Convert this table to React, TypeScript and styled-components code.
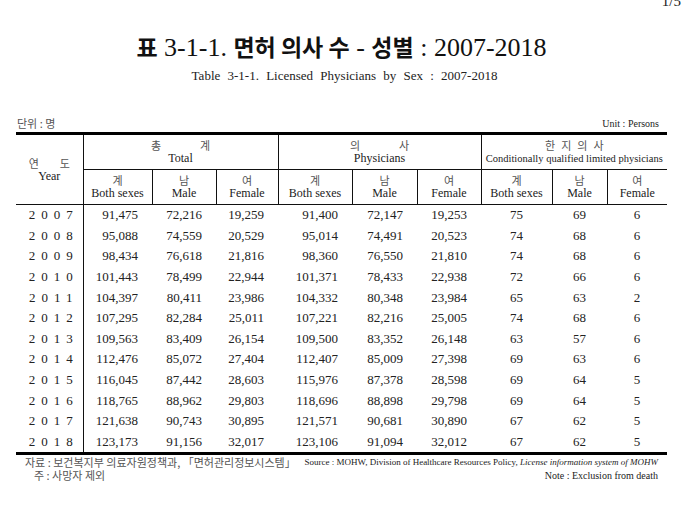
import React from 'react';
import styled, { createGlobalStyle } from 'styled-components';

const Global = createGlobalStyle`
  html, body { margin: 0; padding: 0; background: #fff; }
  body {
    width: 689px; height: 507px; overflow: hidden;
    font-family: "Liberation Serif", "Noto Sans CJK KR", serif;
    color: #1a1a1a;
  }
`;

const Page = styled.div`
  width: 689px;
  height: 507px;
  overflow: hidden;
  display: flex;
  flex-direction: column;
`;

const PageNo = styled.div`
  height: 8px;
  text-align: right;
  padding-right: 8px;
  font: 15px/16px "Liberation Serif", serif;
  color: #222;
  margin-top: -7px;
  & > span { display: inline-block; }
`;

const Title = styled.h1`
  margin: 30px 0 0;
  text-align: center;
  font: 400 26px/30px "Liberation Serif", serif;
  color: #111;
  padding-right: 6px;
  white-space: nowrap;
`;

const TitleKo = styled.span`
  font-family: "Noto Sans CJK KR", sans-serif;
  font-weight: 700;
  font-size: 23px;
`;

const Subtitle = styled.div`
  margin-top: 5px;
  text-align: center;
  font: 13px/16px "Liberation Serif", serif;
  word-spacing: 4px;
  color: #222;
`;

const UnitRow = styled.div`
  margin-top: 32px;
  display: flex;
  justify-content: space-between;
  align-items: center;
  padding: 0 30px 0 17px;
  height: 14px;
`;

const KoSmall = styled.span`
  font-family: "Noto Sans CJK KR", sans-serif;
  font-size: 11px;
  line-height: 13px;
  color: #555;
  white-space: nowrap;
`;

const EnSmall = styled.span<{ $italic?: boolean; $size?: number }>`
  font-family: "Liberation Serif", serif;
  font-size: ${(p) => p.$size ?? 10}px;
  line-height: 13px;
  color: #222;
  white-space: nowrap;
  font-style: ${(p) => (p.$italic ? 'italic' : 'normal')};
`;

const Table = styled.table`
  margin: 2px 0 0 16px;
  width: 651px;
  border-collapse: collapse;
  table-layout: fixed;
`;

const Th = styled.th<{ $noLeft?: boolean }>`
  padding: 0;
  height: 34px;
  border: 1px solid #111;
  border-left: ${(p) => (p.$noLeft ? 'none' : '1px solid #111')};
  font-weight: 400;
  text-align: center;
  vertical-align: middle;
  &:last-child { border-right: none; }
`;

const TopTh = styled(Th)`
  border-top: 3px solid #000;
`;

const HeadKo = styled.div<{ $gap?: number }>`
  display: flex;
  justify-content: center;
  gap: ${(p) => p.$gap ?? 0}px;
  font-family: "Noto Sans CJK KR", sans-serif;
  font-size: 11px;
  line-height: 13px;
  color: #555;
`;

const HeadEn = styled.div<{ $size?: number }>`
  font-family: "Liberation Serif", serif;
  font-size: ${(p) => p.$size ?? 12}px;
  line-height: 13px;
  color: #222;
  white-space: nowrap;
`;

const Tr = styled.tr<{ $last?: boolean }>`
  & > td { border-bottom: ${(p) => (p.$last ? '3px solid #000' : 'none')}; }
`;

const YearTd = styled.td`
  padding: 0 0 0 9px;
  height: 20.6px;
  text-align: center;
  border-right: 1px solid #111;
  font: 13px/20px "Liberation Serif", serif;
  letter-spacing: 6px;
  color: #222;
`;

const NumTd = styled.td<{ $center?: boolean }>`
  padding: ${(p) => (p.$center ? '0' : '0 14px 0 0')};
  height: 20.6px;
  text-align: ${(p) => (p.$center ? 'center' : 'right')};
  font: 13px/20px "Liberation Serif", serif;
  color: #222;
`;

const Footer = styled.div`
  display: flex;
  flex-direction: column;
  padding: 1px 31px 0 25px;
`;

const FootRow = styled.div<{ $indent?: number }>`
  display: flex;
  justify-content: space-between;
  align-items: center;
  height: 13px;
  padding-left: ${(p) => p.$indent ?? 0}px;
`;

const cols = [67, 69, 64, 62, 74, 65, 64, 71, 55, 60];

const rows: [string, ...string[]][] = [
  ['2007', '91,475', '72,216', '19,259', '91,400', '72,147', '19,253', '75', '69', '6'],
  ['2008', '95,088', '74,559', '20,529', '95,014', '74,491', '20,523', '74', '68', '6'],
  ['2009', '98,434', '76,618', '21,816', '98,360', '76,550', '21,810', '74', '68', '6'],
  ['2010', '101,443', '78,499', '22,944', '101,371', '78,433', '22,938', '72', '66', '6'],
  ['2011', '104,397', '80,411', '23,986', '104,332', '80,348', '23,984', '65', '63', '2'],
  ['2012', '107,295', '82,284', '25,011', '107,221', '82,216', '25,005', '74', '68', '6'],
  ['2013', '109,563', '83,409', '26,154', '109,500', '83,352', '26,148', '63', '57', '6'],
  ['2014', '112,476', '85,072', '27,404', '112,407', '85,009', '27,398', '69', '63', '6'],
  ['2015', '116,045', '87,442', '28,603', '115,976', '87,378', '28,598', '69', '64', '5'],
  ['2016', '118,765', '88,962', '29,803', '118,696', '88,898', '29,798', '69', '64', '5'],
  ['2017', '121,638', '90,743', '30,895', '121,571', '90,681', '30,890', '67', '62', '5'],
  ['2018', '123,173', '91,156', '32,017', '123,106', '91,094', '32,012', '67', '62', '5'],
];

const subHeads: [string, string][] = [
  ['계', 'Both sexes'],
  ['남', 'Male'],
  ['여', 'Female'],
];

function Spread({ text, gap }: { text: string; gap: number }) {
  return (
    <HeadKo $gap={gap}>
      {Array.from(text).map((c, i) => (
        <span key={i}>{c}</span>
      ))}
    </HeadKo>
  );
}

export default function App() {
  return (
    <Page>
      <Global />
      <PageNo><span>1/5</span></PageNo>
      <Title>
        <TitleKo>표</TitleKo> 3-1-1. <TitleKo>면허 의사 수</TitleKo> - <TitleKo>성별</TitleKo> : 2007-2018
      </Title>
      <Subtitle>Table 3-1-1. Licensed Physicians by Sex : 2007-2018</Subtitle>
      <UnitRow>
        <KoSmall>단위 : 명</KoSmall>
        <EnSmall>Unit : Persons</EnSmall>
      </UnitRow>
      <Table>
        <colgroup>
          {cols.map((w, i) => (
            <col key={i} style={{ width: w }} />
          ))}
        </colgroup>
        <thead>
          <tr>
            <TopTh rowSpan={2} $noLeft>
              <Spread text="연도" gap={21} />
              <HeadEn>Year</HeadEn>
            </TopTh>
            <TopTh colSpan={3}>
              <Spread text="총계" gap={39} />
              <HeadEn>Total</HeadEn>
            </TopTh>
            <TopTh colSpan={3}>
              <Spread text="의사" gap={39} />
              <HeadEn>Physicians</HeadEn>
            </TopTh>
            <TopTh colSpan={3}>
              <Spread text="한지의사" gap={6} />
              <HeadEn $size={10.5}>Conditionally qualified limited physicians</HeadEn>
            </TopTh>
          </tr>
          <tr>
            {[0, 1, 2].flatMap((g) =>
              subHeads.map(([ko, en], i) => (
                <Th key={`${g}-${i}`}>
                  <HeadKo>{ko}</HeadKo>
                  <HeadEn>{en}</HeadEn>
                </Th>
              ))
            )}
          </tr>
        </thead>
        <tbody>
          {rows.map(([year, ...vals], r) => (
            <Tr key={year} $last={r === rows.length - 1}>
              <YearTd>{year}</YearTd>
              {vals.map((v, i) => (
                <NumTd key={i} $center={i >= 6}>
                  {v}
                </NumTd>
              ))}
            </Tr>
          ))}
        </tbody>
      </Table>
      <Footer>
        <FootRow>
          <KoSmall>자료 : 보건복지부 의료자원정책과, 「면허관리정보시스템」</KoSmall>
          <EnSmall $size={9}>
            Source : MOHW, Division of Healthcare Resources Policy,{' '}
            <EnSmall $italic $size={9}>License information system of MOHW</EnSmall>
          </EnSmall>
        </FootRow>
        <FootRow $indent={9}>
          <KoSmall>주 : 사망자 제외</KoSmall>
          <EnSmall>Note : Exclusion from death</EnSmall>
        </FootRow>
      </Footer>
    </Page>
  );
}
